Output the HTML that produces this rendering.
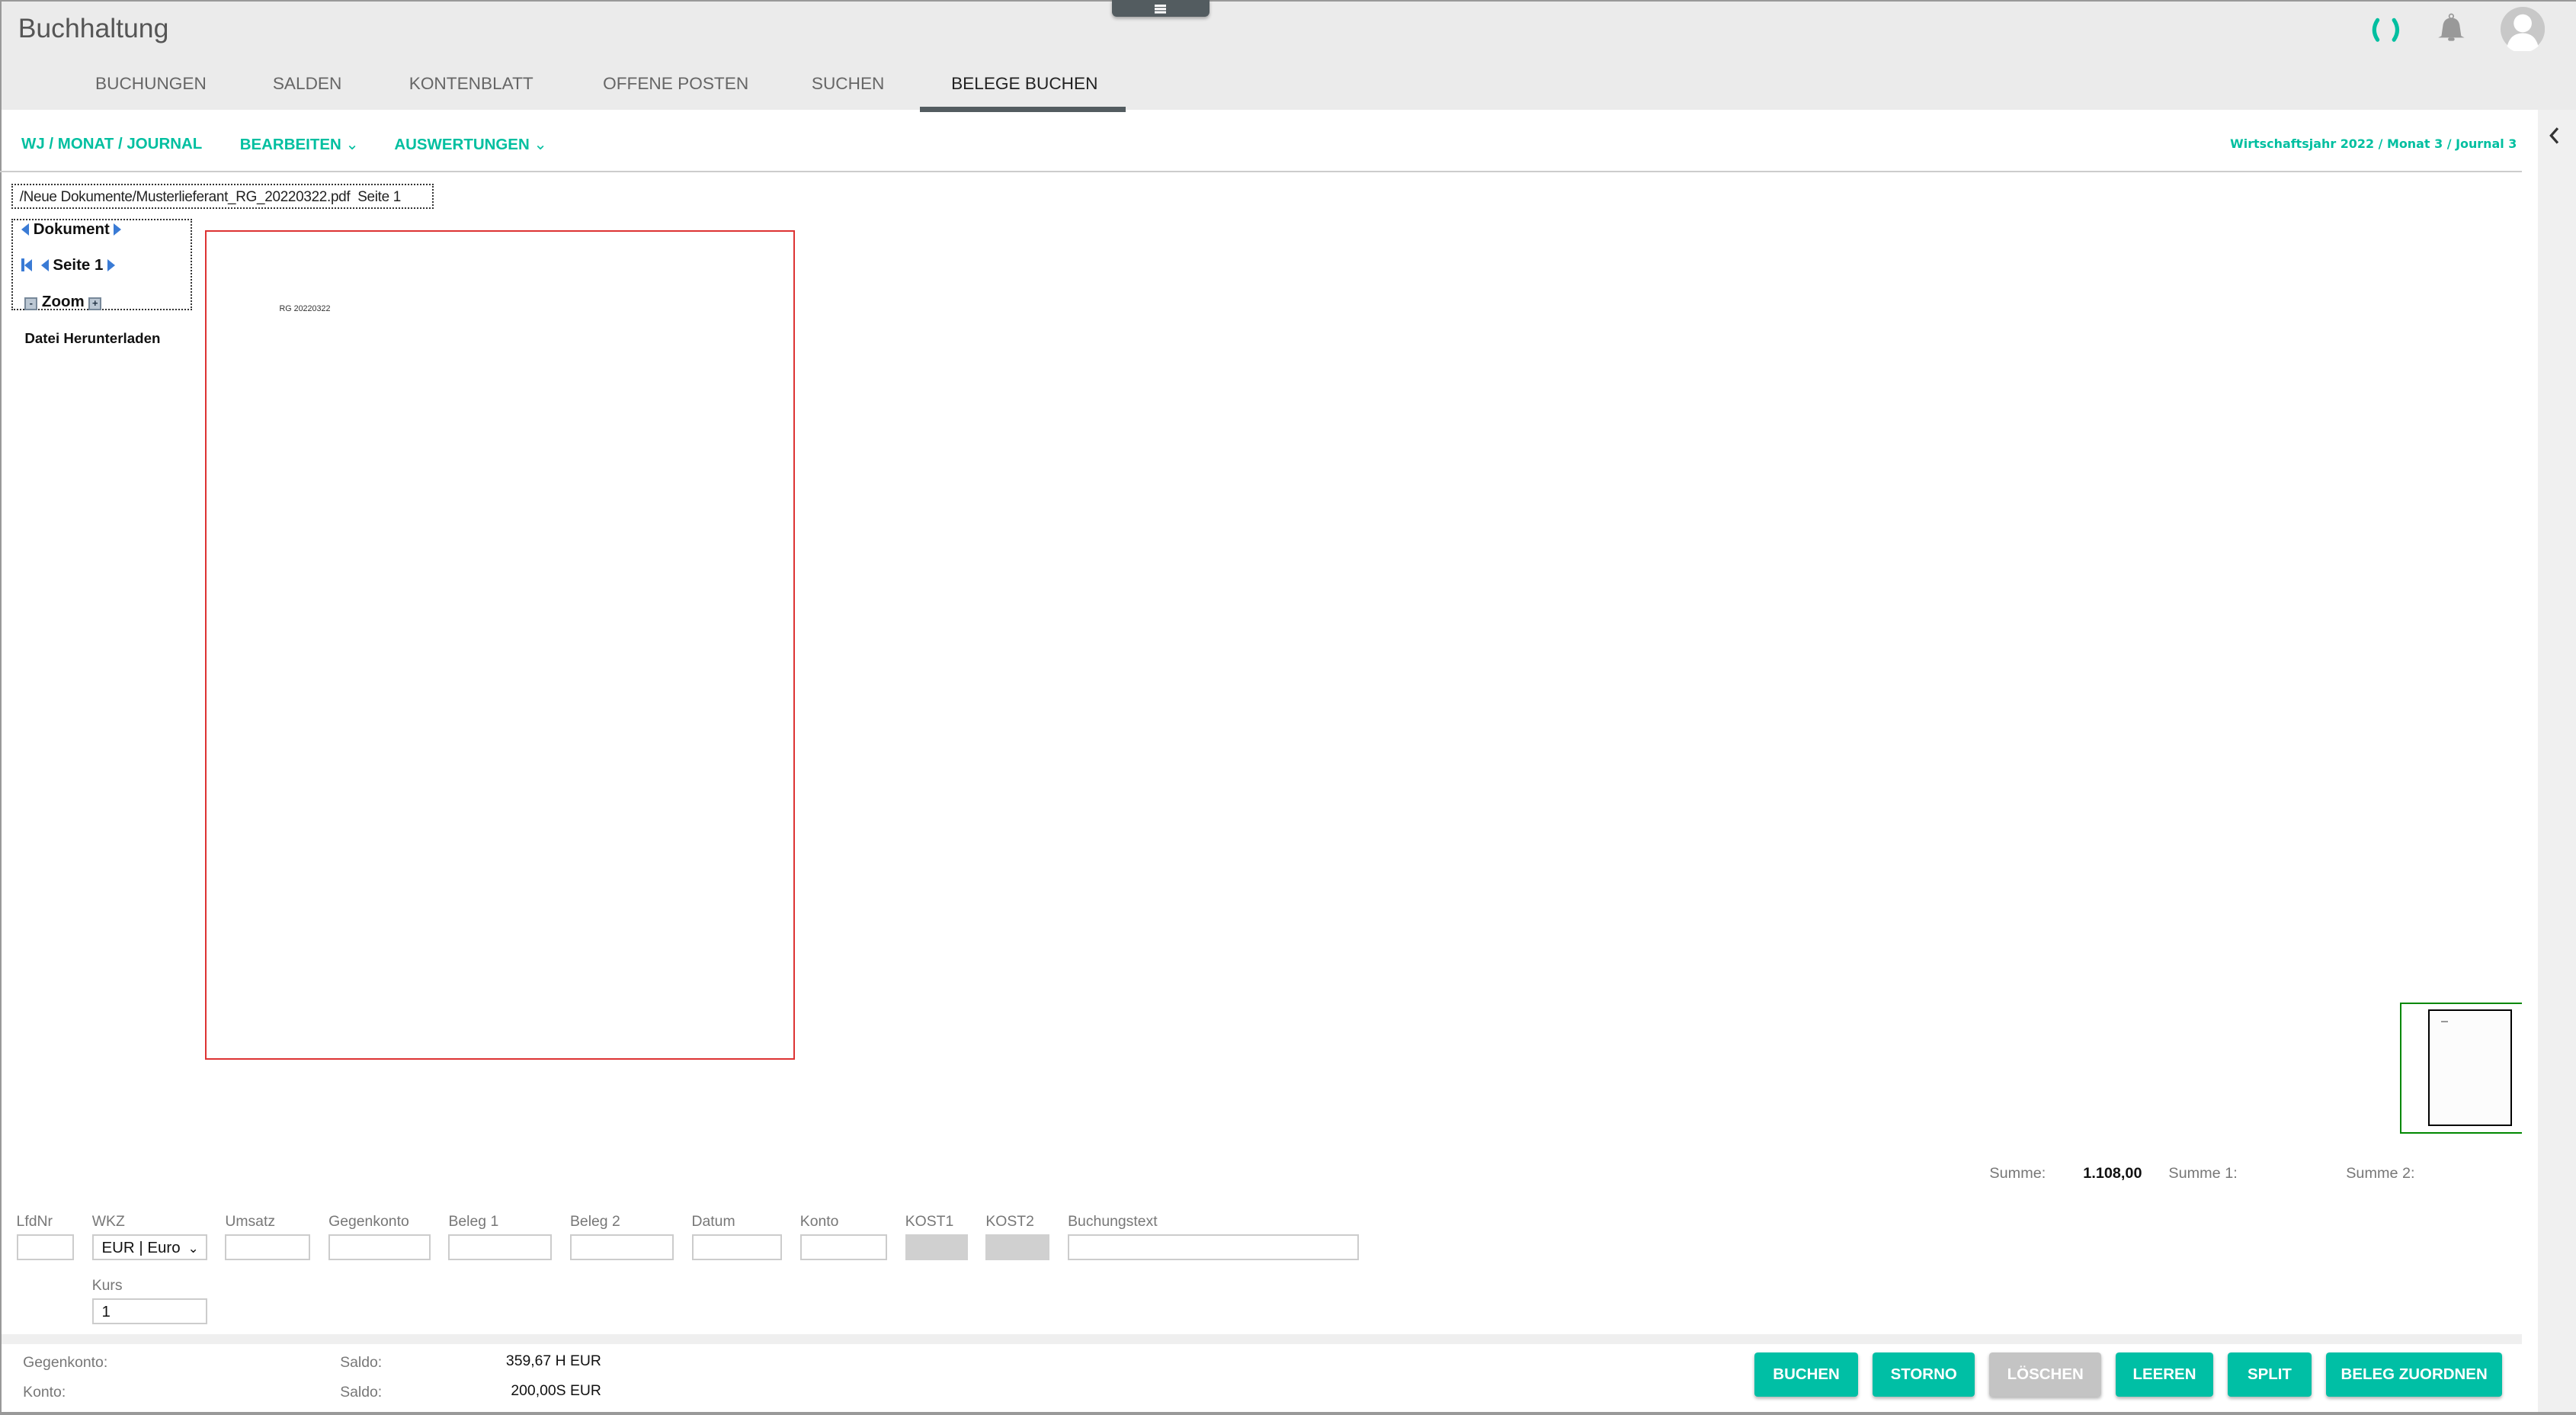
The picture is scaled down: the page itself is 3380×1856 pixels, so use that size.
<!DOCTYPE html>
<html><head><meta charset="utf-8"><style>
html,body{margin:0;padding:0;background:#fff;overflow:hidden}
#r{position:relative;width:1568px;height:861px;zoom:2.1556;font-family:"Liberation Sans",sans-serif;overflow:hidden;background:#fff}
.a{position:absolute;white-space:nowrap}
.tab{position:absolute;top:45px;font-size:10.5px;color:#666}
.sub{position:absolute;top:82px;font-size:9.5px;color:#00bfa0;font-weight:bold}
.lbl{position:absolute;top:738px;font-size:9px;color:#777}
.in{position:absolute;top:751px;height:16px;border:1px solid #ccc;box-sizing:border-box;background:#fff}
.btn{position:absolute;top:823px;height:27px;background:#00bfa5;color:#fff;font-size:9.5px;font-weight:bold;text-align:center;line-height:27px;border-radius:2px;box-shadow:0 1px 2px rgba(0,0,0,.3)}
.tri{display:inline-block;width:0;height:0;border-top:4px solid transparent;border-bottom:4px solid transparent;vertical-align:-1px}
.l{border-right:5px solid #3a7bd5}.rt{border-left:5px solid #3a7bd5}
.zb{display:inline-block;width:6px;height:6px;background:#bcc8d4;border:1px solid #789;vertical-align:0px;font-size:6px;line-height:6px;text-align:center;color:#234}
</style></head><body><div id="r">
<div class="a" style="left:0;top:0;width:1568px;height:67px;background:#ebebeb;border-top:1px solid #999;box-sizing:border-box"></div>
<div class="a" style="left:0;top:0;width:1px;height:861px;background:#999"></div>
<div class="a" style="left:0;top:859px;width:1568px;height:2px;background:#999"></div>
<div class="a" style="left:11px;top:8px;font-size:16.5px;color:#555">Buchhaltung</div>
<div class="a" style="left:677px;top:0;width:59px;height:10px;background:#535c60;border-radius:0 0 3px 3px;box-shadow:0 1px 2px rgba(0,0,0,.3)"></div>
<div class="a" style="left:703px;top:3px;width:7px;height:1px;background:#fff;box-shadow:0 2px 0 #fff,0 4px 0 #fff"></div>
<div class="tab" style="left:58px">BUCHUNGEN</div>
<div class="tab" style="left:166px">SALDEN</div>
<div class="tab" style="left:249px">KONTENBLATT</div>
<div class="tab" style="left:367px">OFFENE POSTEN</div>
<div class="tab" style="left:494px">SUCHEN</div>
<div class="tab" style="left:579px;color:#222">BELEGE BUCHEN</div>
<div class="a" style="left:560px;top:65px;width:125px;height:3px;background:#535c60"></div>
<svg class="a" style="left:1443px;top:10px" width="18" height="16"><path d="M4 2 Q0 8 4 14" stroke="#00bfa0" stroke-width="2.4" fill="none" stroke-linecap="round"/><path d="M14 2 Q18 8 14 14" stroke="#00bfa0" stroke-width="2.4" fill="none" stroke-linecap="round"/></svg>
<svg class="a" style="left:1483px;top:8px" width="18" height="19"><circle cx="9" cy="2" r="1.3" fill="none" stroke="#999" stroke-width=".8"/><path d="M3 14 L4 7 Q5 3 9 3 Q13 3 14 7 L15 14 L17 15 L1 15 Z" fill="#999"/><rect x="7" y="15" width="4" height="2" rx="1" fill="#999"/></svg>
<svg class="a" style="left:1522px;top:4px" width="27" height="27"><circle cx="13.5" cy="13.5" r="13.5" fill="#c8c8c8"/><circle cx="13.5" cy="10" r="5.5" fill="#fff"/><path d="M4 24 Q6 16 13.5 16 Q21 16 23 24 Q18 28 13.5 28 Q8 28 4 24Z" fill="#fff"/></svg>
<div class="a" style="left:1545px;top:67px;width:23px;height:792px;background:#f0f0f0"></div>
<svg class="a" style="left:1551px;top:77px" width="9" height="11"><path d="M6 1 L2 5.5 L6 10" stroke="#333" stroke-width="1.5" fill="none"/></svg>
<div class="sub" style="left:13px">WJ / MONAT / JOURNAL</div>
<div class="sub" style="left:146px">BEARBEITEN <span style="font-weight:normal">&#8964;</span></div>
<div class="sub" style="left:240px">AUSWERTUNGEN <span style="font-weight:normal">&#8964;</span></div>
<div class="a" style="right:36px;top:83px;font-size:7.4px;font-weight:bold;color:#00bfa0;font-family:'DejaVu Sans',sans-serif">Wirtschaftsjahr 2022 / Monat 3 / Journal 3</div>
<div class="a" style="left:0;top:104px;width:1535px;height:1px;background:#ccc"></div>
<div class="a" style="left:7px;top:112px;width:257px;height:15px;border:1px dotted #333;box-sizing:border-box;font-size:8.8px;line-height:15px;padding-left:4px;color:#222;letter-spacing:-0.15px">/Neue Dokumente/Musterlieferant_RG_20220322.pdf &nbsp;Seite 1</div>
<div class="a" style="left:7px;top:133px;width:110px;height:56px;border:1px dotted #333;box-sizing:border-box"></div>
<div class="a" style="left:13px;top:134px;font-size:9.5px;font-weight:bold;color:#111"><span class="tri l"></span> Dokument <span class="tri rt"></span></div>
<div class="a" style="left:13px;top:156px;font-size:9.5px;font-weight:bold;color:#111"><span style="display:inline-block;width:2px;height:8px;background:#3a7bd5;vertical-align:-1px"></span><span class="tri l"></span> &nbsp;<span class="tri l"></span> Seite 1 <span class="tri rt"></span></div>
<div class="a" style="left:15px;top:178px;font-size:9.5px;font-weight:bold;color:#111"><span class="zb">-</span> Zoom <span class="zb">+</span></div>
<div class="a" style="left:15px;top:201px;font-size:8.7px;font-weight:bold;color:#111">Datei Herunterladen</div>
<div class="a" style="left:125px;top:140px;width:359px;height:505px;border:1px solid #d33;box-sizing:border-box;background:#fff"></div>
<div class="a" style="left:170px;top:185px;font-size:5px;color:#333">RG 20220322</div>
<div class="a" style="left:1461px;top:610px;width:74px;height:80px;border:1px solid #080;border-right:none;box-sizing:border-box"></div>
<div class="a" style="left:1478px;top:614px;width:51px;height:71px;border:1px solid #000;box-sizing:border-box;background:#fcfcfc"></div>
<div class="a" style="left:1486px;top:621px;width:4px;height:1px;background:#999"></div>
<div class="a" style="left:1211px;top:709px;font-size:9.2px;color:#777">Summe:</div>
<div class="a" style="left:1268px;top:709px;font-size:9.2px;font-weight:bold;color:#111">1.108,00</div>
<div class="a" style="left:1320px;top:709px;font-size:9.2px;color:#777">Summe 1:</div>
<div class="a" style="left:1428px;top:709px;font-size:9.2px;color:#777">Summe 2:</div>
<div class="lbl" style="left:10px">LfdNr</div><div class="lbl" style="left:56px">WKZ</div><div class="lbl" style="left:137px">Umsatz</div><div class="lbl" style="left:200px">Gegenkonto</div><div class="lbl" style="left:273px">Beleg 1</div><div class="lbl" style="left:347px">Beleg 2</div><div class="lbl" style="left:421px">Datum</div><div class="lbl" style="left:487px">Konto</div><div class="lbl" style="left:551px">KOST1</div><div class="lbl" style="left:600px">KOST2</div><div class="lbl" style="left:650px">Buchungstext</div>
<div class="in" style="left:10px;width:35px"></div>
<div class="in" style="left:56px;width:70px;font-size:9.5px;line-height:15px;padding-left:5px;color:#111">EUR | Euro<span style="position:absolute;right:4px;font-size:8px">&#8964;</span></div>
<div class="in" style="left:137px;width:52px"></div>
<div class="in" style="left:200px;width:62px"></div>
<div class="in" style="left:273px;width:63px"></div>
<div class="in" style="left:347px;width:63px"></div>
<div class="in" style="left:421px;width:55px"></div>
<div class="in" style="left:487px;width:53px"></div>
<div class="in" style="left:551px;width:38px;background:#d0d0d0;border-color:#d0d0d0"></div>
<div class="in" style="left:600px;width:39px;background:#d0d0d0;border-color:#d0d0d0"></div>
<div class="in" style="left:650px;width:177px"></div>
<div class="lbl" style="left:56px;top:777px">Kurs</div>
<div class="in" style="left:56px;top:790px;width:70px;font-size:9.5px;line-height:15px;padding-left:5px;color:#111">1</div>
<div class="a" style="left:1px;top:812px;width:1534px;height:6px;background:#efefef"></div>
<div class="a" style="left:14px;top:824px;font-size:9px;color:#777">Gegenkonto:</div>
<div class="a" style="left:14px;top:842px;font-size:9px;color:#777">Konto:</div>
<div class="a" style="left:207px;top:824px;font-size:9px;color:#777">Saldo:</div>
<div class="a" style="left:207px;top:842px;font-size:9px;color:#777">Saldo:</div>
<div class="a" style="left:280px;width:86px;text-align:right;top:823px;font-size:9px;color:#111">359,67 H EUR</div>
<div class="a" style="left:280px;width:86px;text-align:right;top:841px;font-size:9px;color:#111">200,00S EUR</div>
<div class="btn" style="left:1068px;width:63px">BUCHEN</div>
<div class="btn" style="left:1140px;width:62px">STORNO</div>
<div class="btn" style="left:1211px;width:68px;background:#c4c4c4">LÖSCHEN</div>
<div class="btn" style="left:1288px;width:59px">LEEREN</div>
<div class="btn" style="left:1356px;width:51px">SPLIT</div>
<div class="btn" style="left:1416px;width:107px">BELEG ZUORDNEN</div>
</div></body></html>
